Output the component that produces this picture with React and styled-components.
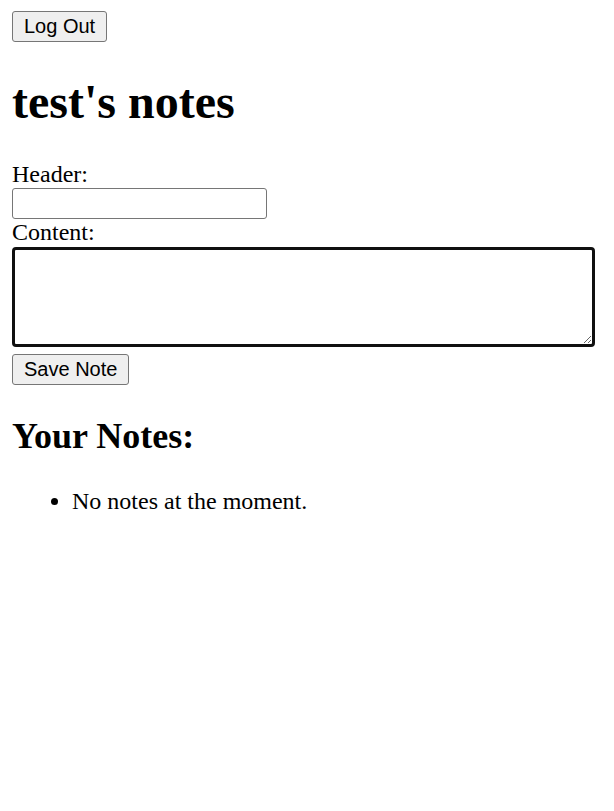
import React from 'react';
import styled, { createGlobalStyle } from 'styled-components';

const GlobalStyle = createGlobalStyle`
  body {
    margin: 11px 12px 12px;
    font-family: "Liberation Serif", "Times New Roman", serif;
    font-size: 24px;
    color: #000000;
    background: #ffffff;
  }
`;

const Button = styled.button`
  display: inline-block;
  height: 31px;
  padding: 0 11px;
  font-family: "Liberation Sans", Arial, sans-serif;
  font-size: 20px;
  color: #000000;
  background-color: #efefef;
  border: 1px solid #767676;
  border-radius: 3px;
  line-height: 29px;
  cursor: pointer;
`;

const Title = styled.h1`
  font-size: 48px;
  font-weight: bold;
  margin: 32px 0;
`;

const SubTitle = styled.h2`
  font-size: 36px;
  font-weight: bold;
  margin: 30px 0;
`;

const Form = styled.form`
  display: block;
  margin: 0;
`;

const Label = styled.label`
  display: block;
`;

const TextInput = styled.input`
  display: block;
  box-sizing: border-box;
  width: 255px;
  height: 31px;
  margin: 0;
  padding: 2px 3px;
  border: 1px solid #767676;
  border-radius: 3px;
  font-size: 20px;
`;

const TextArea = styled.textarea`
  display: block;
  box-sizing: border-box;
  width: 583px;
  height: 100px;
  margin: 1px 0 7px;
  padding: 3px;
  border: 3px solid #101010;
  border-radius: 4px;
  outline: none;
  font-size: 20px;
`;

const NoteList = styled.ul`
  margin: 24px 0;
  padding-left: 60px;
`;

const NoteItem = styled.li`
  line-height: 28px;
`;

class App extends React.Component {
  render() {
    return (
      <>
        <GlobalStyle />
        <Button type="button">Log Out</Button>
        <Title>test's notes</Title>
        <Form onSubmit={(e) => e.preventDefault()}>
          <Label htmlFor="header">Header:</Label>
          <TextInput id="header" type="text" />
          <Label htmlFor="content">Content:</Label>
          <TextArea id="content" />
          <Button type="submit">Save Note</Button>
        </Form>
        <SubTitle>Your Notes:</SubTitle>
        <NoteList>
          <NoteItem>No notes at the moment.</NoteItem>
        </NoteList>
      </>
    );
  }
}

export default App;
